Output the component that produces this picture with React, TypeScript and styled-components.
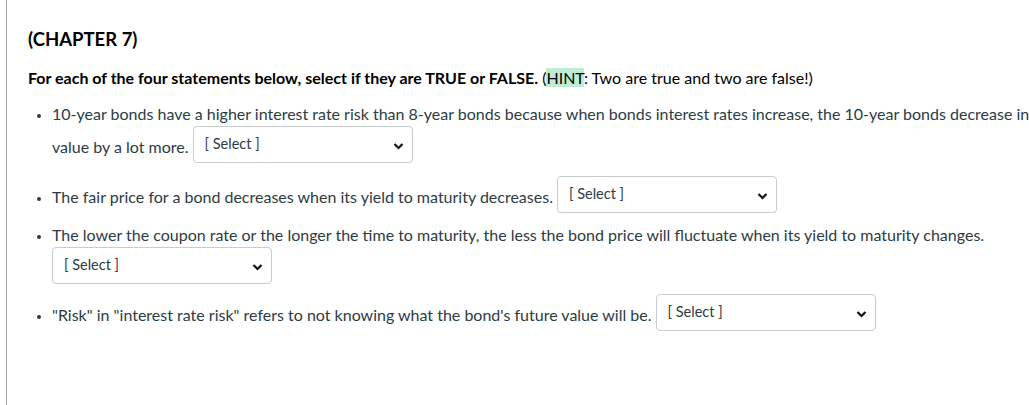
import React from 'react'
import styled, { createGlobalStyle } from 'styled-components'

const Global = createGlobalStyle`
    html, body {
        margin: 0;
        padding: 0;
        background: #fff;
        overflow: hidden;
    }
    body {
        font-family: Lato, "Open Sans", sans-serif;
        color: #2d3b45;
    }
`;

const Page = styled.div`
    margin-left: 6px;
    border-left: 1px solid #a6a6a6;
    min-height: 405px;
    padding: 27px 0 0 21px;
    box-sizing: border-box;
`;

const Content = styled.div`
    width: 1030px;
`;

const Title = styled.h2`
    margin: 0 0 15px;
    font-size: 18.5px;
    font-weight: 700;
    color: #000;
    line-height: 24px;
`;

const Intro = styled.p`
    margin: 0 0 12px;
    font-size: 16px;
    line-height: 24px;
    color: #000;
    strong { font-weight: 700; }
`;

const Hint = styled.span`
    background: #c0ecd3;
`;

const List = styled.ul`
    margin: 0;
    padding-left: 24px;
    list-style: disc;
`;

const Item = styled.li<{ $gap?: number }>`
    font-size: 16px;
    line-height: 24px;
    color: #2d3b45;
    margin-bottom: ${p => p.$gap ?? 1}px;
    &::marker { font-size: 12px; }
`;

const SelectBox = styled.span`
    display: inline-flex;
    align-items: center;
    justify-content: space-between;
    box-sizing: border-box;
    width: 220px;
    height: 37px;
    margin: 0 0 9px 0;
    padding: 0 8px 2px 11px;
    border: 1px solid #c7cdd1;
    border-radius: 4px;
    vertical-align: middle;
    font-size: 14.5px;
    color: #2d3b45;
    background: #fff;
`;

const Chevron = () => (
    <svg width="11" height="8" viewBox="0 0 11 8" style={{ marginTop: 4 }}>
        <path d="M1.5 2 L5.5 6 L9.5 2" fill="none" stroke="#111" strokeWidth="2.2" />
    </svg>
)

const Select = () => (
    <SelectBox>
        <span>[ Select ]</span>
        <Chevron />
    </SelectBox>
)

const App = () => {
    return (
        <Page>
            <Global />
            <Content>
                <Title>(CHAPTER 7)</Title>
                <Intro>
                    <strong>For each of the four statements below, select if they are TRUE or FALSE.</strong> (<Hint>HINT</Hint>: Two are true and two are false!)
                </Intro>
                <List>
                    <Item $gap={4}>
                        10-year bonds have a higher interest rate risk than 8-year bonds because when bonds interest rates increase, the 10-year bonds decrease in value by a lot more. <Select />
                    </Item>
                    <Item>
                        The fair price for a bond decreases when its yield to maturity decreases. <Select />
                    </Item>
                    <Item>
                        The lower the coupon rate or the longer the time to maturity, the less the bond price will fluctuate when its yield to maturity changes. <Select />
                    </Item>
                    <Item>
                        "Risk" in "interest rate risk" refers to not knowing what the bond's future value will be. <Select />
                    </Item>
                </List>
            </Content>
        </Page>
    )
}

export default App
